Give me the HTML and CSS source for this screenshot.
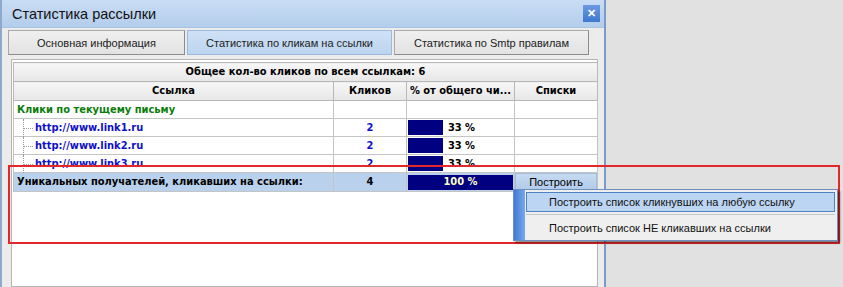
FILE: index.html
```html
<!DOCTYPE html>
<html lang="ru">
  <head>
    <meta charset="UTF-8" />
    <title>Статистика рассылки</title>
    <link rel="stylesheet" href="styles.css">
  </head>
  <body>
    <div class="window">
      <div class="titlebar">
        <span class="title">Статистика рассылки</span>
        <span class="close">&#x2715;</span>
      </div>

      <div class="tabs">
        <div class="tab tab-main">Основная информация</div>
        <div class="tab tab-clicks active">Статистика по кликам на ссылки</div>
        <div class="tab tab-smtp">Статистика по Smtp правилам</div>
      </div>

      <div class="panel">
        <table class="grid">
          <tr class="caption">
            <th colspan="4">Общее кол-во кликов по всем ссылкам: 6</th>
          </tr>
          <tr class="head">
            <th class="c-link">Ссылка</th>
            <th class="c-count">Кликов</th>
            <th class="c-pct">% от общего чи...</th>
            <th class="c-lists">Списки</th>
          </tr>
          <tr>
            <td class="group">Клики по текущему письму</td>
            <td></td>
            <td></td>
            <td></td>
          </tr>
          <tr>
            <td><div class="link"><span class="branch"></span>http://www.link1.ru</div></td>
            <td class="count">2</td>
            <td class="pct"><div class="bar"><span class="fill" style="width: 33%"></span>33 %</div></td>
            <td></td>
          </tr>
          <tr>
            <td><div class="link"><span class="branch"></span>http://www.link2.ru</div></td>
            <td class="count">2</td>
            <td class="pct"><div class="bar"><span class="fill" style="width: 33%"></span>33 %</div></td>
            <td></td>
          </tr>
          <tr>
            <td><div class="link"><span class="branch"></span>http://www.link3.ru</div></td>
            <td class="count">2</td>
            <td class="pct"><div class="bar"><span class="fill" style="width: 33%"></span>33 %</div></td>
            <td></td>
          </tr>
          <tr class="total">
            <td>Уникальных получателей, кликавших на ссылки:</td>
            <td class="count">4</td>
            <td class="pct"><div class="bar full">100 %</div></td>
            <td class="btn-cell"><span class="build">Построить</span></td>
          </tr>
        </table>
      </div>
    </div>

    <!-- highlight frame and dropdown menu on top -->
    <div class="highlight"></div>
    <div class="menu">
      <div class="menu-item hover">Построить список кликнувших на любую ссылку</div>
      <div class="menu-sep"></div>
      <div class="menu-item">Построить список НЕ кликавших на ссылки</div>
    </div>
  </body>
</html>
```

FILE: styles.css
```css
/* Page */
body {
  margin: 0;
  height: 287px;
  overflow: hidden;
  background: #e1e1e1;
  font-family: "Liberation Sans", Arial, sans-serif;
  font-size: 11px;
  color: #000;
  position: relative;
}

/* Window */
.window {
  width: 602px;
  height: 287px;
  background: #ececec;
  border-left: 2px solid #8fa9cc;
  border-right: 2px solid #7b9cc9;
  display: flex;
  flex-direction: column;
}

.titlebar {
  height: 27px;
  display: flex;
  align-items: center;
  justify-content: space-between;
  padding: 0 4px 0 10px;
  background: linear-gradient(#c9ddf4, #b3cdec);
  border-bottom: 1px solid #a9c3e3;
}

.title {
  font-size: 14.5px;
  color: #111;
}

.close {
  width: 17px;
  height: 17px;
  background: linear-gradient(#6a9ae0, #3f78d0);
  color: #fff;
  font-size: 11px;
  font-weight: bold;
  display: flex;
  align-items: center;
  justify-content: center;
}

/* Tabs */
.tabs {
  display: flex;
  gap: 2px;
  padding: 2px 0 0 6px;
}

.tab {
  height: 23px;
  display: flex;
  align-items: center;
  justify-content: center;
  background: linear-gradient(#f0f0f0, #e2e2e2);
  border: 1px solid #a8a8a8;
  border-right-color: #8c8c8c;
  border-bottom-color: #8c8c8c;
  color: #222;
  font-size: 11px;
}

.tab-main { width: 175px; }
.tab-clicks { width: 203px; }
.tab-smtp { width: 193px; }

.tab.active {
  background: linear-gradient(#cfe1f6, #bcd4ef);
  border-color: #9db8da;
}

/* Grid panel */
.panel {
  flex: 1;
  margin: 4px 6px 0 9px;
  background: #fff;
  border: 1px solid #b5b5b5;
  padding: 2px 0 0 1px;
}

.grid {
  width: 585px;
  border-collapse: collapse;
  font-size: 11px;
  line-height: 14px;
  font-weight: bold;
  font-family: "DejaVu Sans Condensed", "DejaVu Sans", sans-serif;
}

.grid th,
.grid td {
  height: 18px;
  padding: 0 3px;
  border: 1px solid #c4c4c4;
  white-space: nowrap;
}

.grid td {
  height: 17px;
}

.grid th {
  background: linear-gradient(#f7f7f7, #e6e6e6);
  border-color: #b8b8b8;
}

.c-link { width: 313px; }
.c-count { width: 66px; }
.c-pct { width: 101px; text-align: left; }
.c-lists { width: 76px; }

.group {
  color: #0a7d0a;
}

.link {
  display: flex;
  align-items: center;
  height: 16px;
  color: #1010c8;
}

.branch {
  width: 9px;
  height: 18px;
  margin: -1px 2px -1px 6px;
  border-left: 1px dotted #999;
  background: linear-gradient(90deg, #999 50%, transparent 50%) 0 9px / 2px 1px repeat-x;
}

.count {
  text-align: center;
  color: #1010c8;
}

.grid td.pct {
  padding: 0 0 0 1px;
}

.bar {
  display: flex;
  align-items: center;
  gap: 5px;
  height: 15px;
}

.fill {
  height: 15px;
  background: #000080;
}

.bar.full {
  justify-content: center;
  background: #000080;
  color: #ffffc8;
  margin-right: 1px;
}

/* Summary row */
.total td {
  background: #b9d1ec;
  border-top-color: #9fb7d6;
}

.total .count {
  color: #000;
}

.total td.btn-cell {
  padding: 0;
  background: #fff;
}

.build {
  display: flex;
  align-items: center;
  justify-content: center;
  height: 16px;
  background: linear-gradient(#c5daf2, #b2cbea);
  border: 1px solid #a4bcdc;
  font-family: "Liberation Sans", Arial, sans-serif;
  font-weight: normal;
  font-size: 11px;
}

/* Overlays */
.highlight {
  position: absolute;
  left: 8px;
  top: 165px;
  width: 828px;
  height: 75px;
  border: 2px solid #e3272b;
}

.menu {
  position: absolute;
  left: 513px;
  top: 189px;
  width: 309px;
  padding: 2px 2px 2px 12px;
  background: #efefef linear-gradient(90deg, #3f7ad6, #78a8ea) 0 0 / 11px 100% no-repeat;
  border: 1px solid #6c8fc0;
  box-shadow: 2px 2px 2px rgba(0, 0, 0, 0.45);
}

.menu-item {
  height: 18px;
  display: flex;
  align-items: center;
  padding-left: 22px;
  border: 1px solid transparent;
  color: #111;
  font-size: 11px;
}

.menu-item.hover {
  background: #bcd5f2;
  border-color: #4d82c4;
}

.menu-sep {
  height: 1px;
  margin: 2px 0 3px 0;
  background: #c8c8c8;
}
```
